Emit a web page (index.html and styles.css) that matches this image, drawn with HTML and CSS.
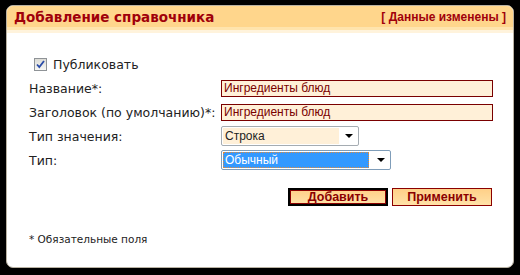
FILE: index.html
```html
<!DOCTYPE html>
<html lang="ru">
<head>
    <meta charset="UTF-8">
    <title>Добавление справочника</title>
    <link rel="stylesheet" href="styles.css">
</head>
<body>
    <div class="panel">
        <header class="panel-header">
            <h1>Добавление справочника</h1>
            <span class="status">[ Данные изменены ]</span>
        </header>

        <form class="panel-body">
            <div class="form-grid">
                <div class="row-check">
                    <span class="checkbox">
                        <svg viewBox="0 0 11 11"><path d="M2 5.5 L4.3 8 L9 2" fill="none" stroke="#2a4ca8" stroke-width="1.8"/></svg>
                    </span>
                    <span>Публиковать</span>
                </div>

                <label>Название*:</label>
                <div><input class="text-input" type="text" value="Ингредиенты блюд"></div>

                <label>Заголовок (по умолчанию)*:</label>
                <div><input class="text-input" type="text" value="Ингредиенты блюд"></div>

                <label>Тип значения:</label>
                <div>
                    <div class="select select-short">
                        <span class="select-value">Строка</span>
                        <span class="arrow"></span>
                    </div>
                </div>

                <label>Тип:</label>
                <div>
                    <div class="select select-focus">
                        <span class="select-value">Обычный</span>
                        <span class="arrow"></span>
                    </div>
                </div>
            </div>

            <div class="buttons">
                <button type="button" class="btn btn-default">Добавить</button>
                <button type="button" class="btn">Применить</button>
            </div>

            <p class="note">* Обязательные поля</p>
        </form>
    </div>
</body>
</html>
```

FILE: styles.css
```css
/* Base */
html, body {
    margin: 0;
    padding: 0;
    background: #000;
}

body {
    padding: 5px 6px 7px 6px;
    font-family: "DejaVu Sans", Verdana, sans-serif;
    color: #222;
}

/* Panel frame */
.panel {
    width: 506px;
    height: 261px;
    background: #fff;
    border: 1px solid #b9b2a3;
    border-radius: 7px;
    overflow: hidden;
}

.panel-header {
    display: flex;
    justify-content: space-between;
    align-items: center;
    height: 21px;
    padding: 0 7px 0 7px;
    background: #ffd68c;
    border-bottom: 3px solid #ffe4ad;
    box-shadow: 0 3px 0 #fff3dc;
}

.panel-header h1 {
    margin: 0;
    font-size: 13.5px;
    font-weight: bold;
    color: #a0000a;
}

.status {
    font-family: "Liberation Sans", Arial, sans-serif;
    font-size: 12px;
    font-weight: bold;
    color: #a0000a;
}

/* Form */
.panel-body {
    padding: 22px 21px 0 22px;
}

.form-grid {
    display: grid;
    grid-template-columns: 192px 1fr;
    grid-auto-rows: 24px;
    align-items: center;
    font-size: 12.5px;
}

.form-grid label {
    white-space: nowrap;
}

.row-check {
    grid-column: 1 / 3;
    display: flex;
    align-items: center;
    gap: 6px;
    padding-left: 5px;
}

.checkbox {
    width: 11px;
    height: 11px;
    border: 1px solid #8f9397;
    background: linear-gradient(#dcdcd6, #f7f7f4);
    display: flex;
}

.checkbox svg {
    width: 11px;
    height: 11px;
}

.text-input {
    display: block;
    box-sizing: border-box;
    width: 272px;
    height: 17px;
    margin: 0;
    padding: 0 2px;
    border: 1px solid #7a0000;
    background: #fff0d8;
    color: #7a0000;
    font-family: "Liberation Sans", Arial, sans-serif;
    font-size: 12px;
}

.select {
    box-sizing: border-box;
    height: 20px;
    display: flex;
    align-items: center;
    padding: 1px;
    border: 1px solid #a5acb2;
    border-radius: 2px;
    background: #fff;
    font-family: "Liberation Sans", Arial, sans-serif;
    font-size: 12px;
}

.select-short {
    width: 138px;
}

.select-short .select-value {
    background: #fff0d8;
    width: 116px;
}

.select-focus {
    width: 170px;
    border-color: #7f9db9;
}

.select-focus .select-value {
    background: #3399ff;
    color: #fff;
    width: 146px;
    outline: 1px dotted #e08a3c;
    outline-offset: -1px;
}

.select-value {
    box-sizing: border-box;
    height: 16px;
    line-height: 16px;
    padding-left: 2px;
}

.arrow {
    margin-left: auto;
    margin-right: 4px;
    width: 0;
    height: 0;
    border-left: 4px solid transparent;
    border-right: 4px solid transparent;
    border-top: 4px solid #000;
}

/* Buttons */
.buttons {
    display: flex;
    justify-content: flex-end;
    gap: 4px;
    margin-top: 16px;
}

.btn {
    box-sizing: border-box;
    width: 100px;
    height: 18px;
    padding: 0;
    border: 1px solid #8b0000;
    background: linear-gradient(#ffd088, #ffe2a8);
    color: #8b0000;
    font-family: "Liberation Sans", Arial, sans-serif;
    font-size: 12.5px;
    font-weight: bold;
}

.btn-default {
    border: 2px solid #000;
    box-shadow: inset 0 0 0 1px #8b0000;
}

.note {
    margin: 27px 0 0;
    font-size: 10.5px;
    color: #222;
}
```
